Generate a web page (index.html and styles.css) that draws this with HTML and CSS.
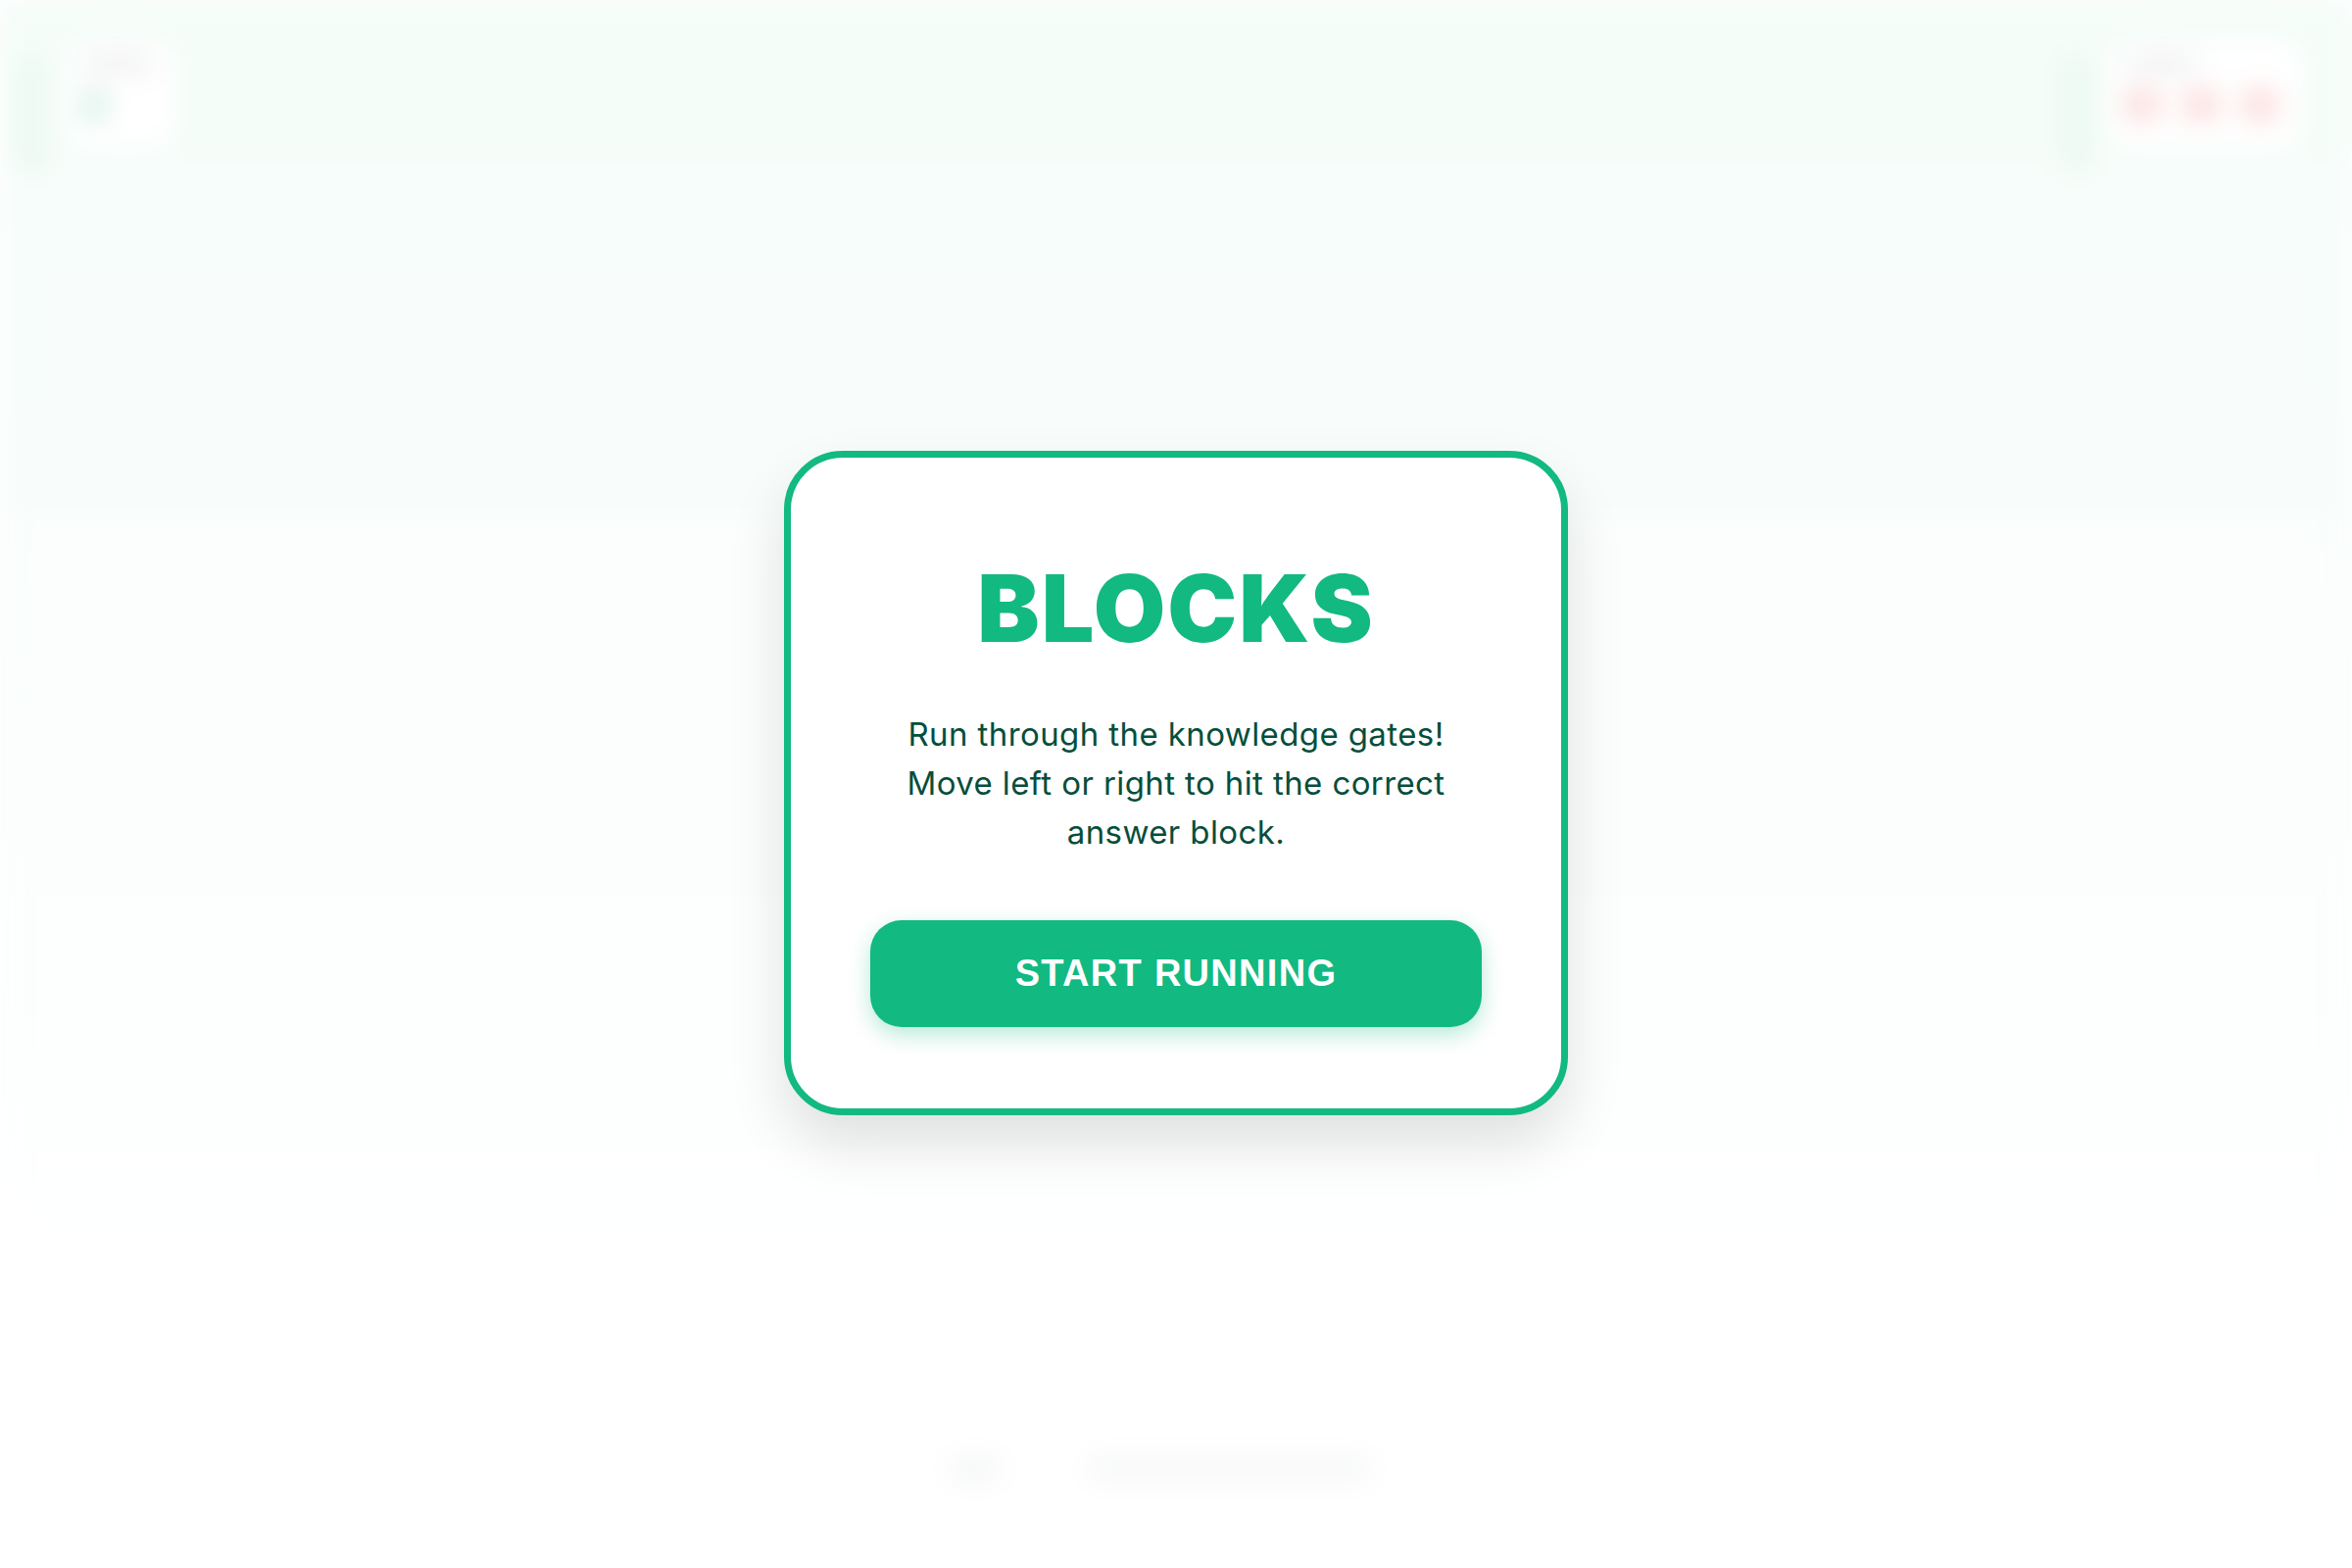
FILE: index.html
```html
<!DOCTYPE html>
<html lang="en">
<head>
<meta charset="utf-8">
<title>Blocks</title>
<link rel="stylesheet" href="styles.css">
</head>
<body>
<div class="game">
  <div class="scene">
    <header class="hud">
      <div class="hud-side">
        <div class="rail"></div>
        <div class="panel">
          <div class="label"></div>
          <div class="score"></div>
        </div>
      </div>
      <div class="hud-side">
        <div class="rail"></div>
        <div class="panel panel-right">
          <div class="label"></div>
          <div class="hearts"><span></span><span></span><span></span></div>
        </div>
      </div>
    </header>
    <div class="band band-a"></div>
    <div class="band band-b"></div>
    <footer class="foot">
      <span class="foot-a"></span>
      <span class="foot-b"></span>
    </footer>
  </div>
  <div class="overlay">
    <div class="card">
      <h1 class="title">BLOCKS</h1>
      <p class="desc">Run through the knowledge gates!<br>Move left or right to hit the correct<br>answer block.</p>
      <button class="start">START RUNNING</button>
    </div>
  </div>
</div>
</body>
</html>
```
FILE: styles.css
```css
html, body {
  margin: 0;
  padding: 0;
  width: 100%;
  height: 100%;
  overflow: hidden;
}
body {
  background: #ffffff;
  font-family: Inter, "Noto Sans", sans-serif;
}
.game {
  position: relative;
  width: 2400px;
  height: 1600px;
}
.scene {
  position: absolute;
  inset: 0;
  display: flex;
  flex-direction: column;
  background: linear-gradient(180deg, #f4fdf8 0px, #f7fdfa 170px, #f8fdfb 500px, #fbfefd 800px, #fdfffe 1150px, #ffffff 1300px, #ffffff 1600px);
  filter: blur(14px);
}
.hud {
  display: flex;
  justify-content: space-between;
  padding: 40px 50px 0 20px;
  height: 120px;
  background: #f4fdf8;
}
.hud-side {
  display: flex;
  gap: 18px;
  align-items: flex-start;
}
.rail {
  width: 26px;
  height: 120px;
  margin-top: 18px;
  border-radius: 13px;
  background: #ebf8f2;
}
.panel {
  width: 115px;
  height: 112px;
  border-radius: 22px;
  background: #ffffff;
  padding: 16px 18px;
  box-sizing: border-box;
  display: flex;
  flex-direction: column;
  gap: 18px;
}
.panel-right {
  width: 200px;
}
.label {
  width: 75px;
  height: 18px;
  border-radius: 9px;
  background: #efefef;
}
.score {
  width: 28px;
  height: 32px;
  border-radius: 14px;
  background: #d3efe5;
}
.hearts {
  display: flex;
  gap: 24px;
}
.hearts span {
  width: 36px;
  height: 30px;
  border-radius: 15px;
  background: #fbd6d6;
}
.band {
  margin: 0 20px;
}
.band-a {
  height: 85px;
  margin-top: 285px;
  background: #f8fdfb;
}
.band-b {
  height: 255px;
  margin-top: 0;
  background: #fbfefd;
}
.foot {
  margin-top: auto;
  margin-bottom: 90px;
  display: flex;
  justify-content: center;
  align-items: center;
  gap: 90px;
  padding-right: 30px;
}
.foot-a {
  width: 50px;
  height: 22px;
  border-radius: 11px;
  background: #f2f4f3;
}
.foot-b {
  width: 290px;
  height: 22px;
  border-radius: 11px;
  background: #f4f6f5;
}
.overlay {
  position: absolute;
  inset: 0;
  display: flex;
  align-items: center;
  justify-content: center;
  padding-bottom: 2px;
}
.card {
  width: 800px;
  box-sizing: border-box;
  border: 7px solid #12b981;
  border-radius: 60px;
  background: #ffffff;
  padding: 80px 80px 83px;
  text-align: center;
  box-shadow: 0 30px 60px rgba(0, 0, 0, 0.12);
  display: flex;
  flex-direction: column;
  align-items: center;
}
.title {
  margin: 19px 0 0;
  font-family: Inter, "Noto Sans", sans-serif;
  font-weight: 900;
  font-size: 95px;
  line-height: 110px;
  letter-spacing: 2px;
  color: #12b981;
}
.desc {
  margin: 48px 0 0;
  font-family: Inter, "Noto Sans", sans-serif;
  font-weight: 400;
  font-size: 33px;
  line-height: 50px;
  letter-spacing: 0.4px;
  color: #064e3b;
}
.start {
  margin-top: 65px;
  width: 624px;
  height: 109px;
  border: none;
  border-radius: 32px;
  background: #12b981;
  color: #ffffff;
  font-family: "Liberation Sans", Arial, sans-serif;
  font-weight: 700;
  font-size: 38px;
  letter-spacing: 1.3px;
  box-shadow: 0 8px 22px rgba(16, 185, 129, 0.3);
  cursor: pointer;
}
```
